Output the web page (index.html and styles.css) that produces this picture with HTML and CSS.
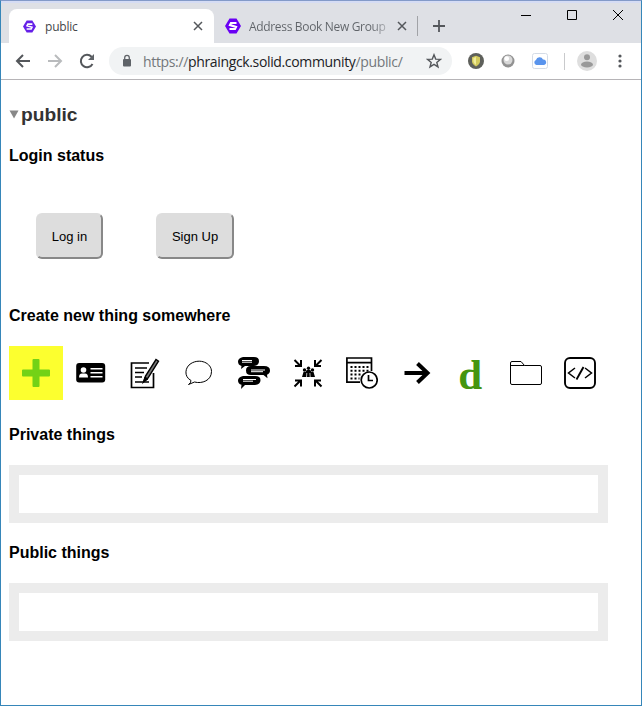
FILE: index.html
```html
<!DOCTYPE html>
<html lang="en">
<head>
<meta charset="utf-8">
<title>public</title>
<link rel="stylesheet" href="styles.css">
</head>
<body>
<div class="window">
  <header class="tabstrip">
    <div class="tab active">
      <svg class="logo small" viewBox="0 0 16 16"><path fill="#651fe8" d="M4.500 .5h7L16 8l-4.500 7.500h-7L0 8z"/><path fill="none" stroke="#fff" stroke-width="2" d="M11.500 5H6L5 7l6 2-1 2H4.500"/></svg>
      <span class="tab-title first-title">public</span>
      <svg class="close" viewBox="0 0 10 10"><path d="M1 1l8 8M9 1L1 9"/></svg>
    </div>
    <div class="tab second">
      <svg class="logo" viewBox="0 0 16 16"><path fill="#6a00f4" d="M4.500 0.500h7L16 8l-4.500 7.500h-7L0 8z"/><path fill="none" stroke="#fff" stroke-width="2.200" d="M11.500 5H6L5 7l6 2-1 2H4.500"/></svg>
      <span class="tab-title second-title">Address Book New Group</span>
      <svg class="close" viewBox="0 0 10 10"><path d="M1 1l8 8M9 1L1 9"/></svg>
    </div>
    <svg class="new-tab" viewBox="0 0 12 12"><path d="M6 0v12M0 6h12"/></svg>
    <div class="controls">
      <svg viewBox="0 0 12 12"><path d="M1 6.500h10"/></svg>
      <svg viewBox="0 0 12 12"><path d="M1.500 1.500h9v9h-9z"/></svg>
      <svg viewBox="0 0 12 12"><path d="M1 1l10 10M11 1L1 11"/></svg>
    </div>
  </header>
  <nav class="toolbar">
    <svg class="nav-icon" viewBox="0 0 16 16"><path d="M15 8H2M8 2L2 8l6 6"/></svg>
    <svg class="nav-icon dim" viewBox="0 0 16 16"><path d="M1 8h13M8 2l6 6-6 6"/></svg>
    <svg class="nav-icon" viewBox="0 0 16 16"><path d="M13.500 11A6.200 6.200 0 1 1 12.500 3.700L14 5.500"/><path fill="#5f6368" stroke="none" d="M15 1v6H9z"/></svg>
    <div class="address">
      <svg class="lock" viewBox="0 0 10 14"><rect x="1" y="5" width="8" height="7.500" rx="1" fill="#5f6368"/><path d="M2.700 5.500V3.700a2.300 2.300 0 0 1 4.600 0v1.800" fill="none" stroke="#5f6368" stroke-width="1.300"/></svg>
      <span class="url">https://<b>phraingck.solid.community</b>/public/</span>
      <svg class="star" viewBox="0 0 16 16"><path d="M8 1.800l1.700 4.300 4.700.3-3.600 3 1.200 4.500L8 11.400l-4 2.500 1.200-4.500-3.600-3 4.700-.3z"/></svg>
    </div>
    <div class="extensions">
      <svg viewBox="0 0 16 16"><circle cx="8" cy="8" r="8" fill="#5e605b"/><path d="M8 2.700l4 1.500v4q0 3-4 5.300-4-2.300-4-5.300v-4z" fill="#d4cb5d"/><path d="M8 4v8q-2.600-1.500-2.600-4V5z" fill="#f1ed9b"/></svg>
      <svg viewBox="0 0 16 16"><circle cx="8" cy="8" r="6.500" fill="#929292"/><circle cx="8" cy="7" r="4.500" fill="#d8d8d8"/><circle cx="6.700" cy="5.700" r="2.400" fill="#fff"/></svg>
      <svg viewBox="0 0 16 16"><rect x=".5" y=".5" width="15" height="15" rx="2" fill="#fff" stroke="#d5dce6"/><path d="M4.500 12a2.600 2.600 0 0 1-.5-5 3.700 3.700 0 0 1 7-.5A2.800 2.800 0 0 1 12 12z" fill="#5994ed"/></svg>
    </div>
    <span class="divider"></span>
    <svg class="avatar" viewBox="0 0 20 20"><circle cx="10" cy="10" r="10" fill="#dedede"/><circle cx="10" cy="6.200" r="3" fill="#999"/><ellipse cx="10" cy="13.500" rx="6" ry="3" fill="#999"/></svg>
    <svg class="more" viewBox="0 0 4 14"><circle cx="2" cy="2" r="1.600"/><circle cx="2" cy="7" r="1.600"/><circle cx="2" cy="12" r="1.600"/></svg>
  </nav>
  <main>
    <h1><svg class="triangle" viewBox="0 0 9 9"><path d="M0 .5h9L4.500 8.500z"/></svg>public</h1>
    <h2>Login status</h2>
    <div class="login">
      <button class="log-in">Log in</button>
      <button class="sign-up">Sign Up</button>
    </div>
    <h2>Create new thing somewhere</h2>
    <div class="things">
      <div class="thing add"><svg viewBox="0 0 32 32"><path fill="#73d216" d="M13.500 2h5q1 0 1 1v9.500h9.500q1 0 1 1v5q0 1-1 1h-9.500V29q0 1-1 1h-5q-1 0-1-1v-9.500H3q-1 0-1-1v-5q0-1 1-1h9.500V3q0-1 1-1z"/></svg></div>
      <div class="thing"><svg viewBox="0 0 32 32"><rect x="2.200" y="6" width="29" height="19.500" rx="3"/><g fill="#fff"><circle cx="9.500" cy="13" r="2.800"/><path d="M5 20.500q0-4 3-4h3q3 0 3 4z"/><path d="M16.500 11h12v1.500h-12zM16.500 15h12v1.500h-12zM16.500 19h12v1.500h-12z"/></g></svg></div>
      <div class="thing"><svg viewBox="0 0 32 32" class="line"><path d="M20 6H2.500v24.500h22V16" stroke-width="1.700"/><path d="M6 11h12M6 15.500h9M6 20h7M6 25h14" stroke-width="1.500"/><path d="M14.500 25l2-6L27 2.500l2.500 1.700L19 21z" fill="#777" stroke-width="1.400"/><path d="M14.500 25l1.500-5 3 2z" fill="#000"/></svg></div>
      <div class="thing"><svg viewBox="0 0 32 32" class="line"><path d="M8 23.500C.5 19.500 2 10 8 6.500c9-5.500 20.500-.5 20.500 8 0 9-9.500 12.500-17 10.500L5.500 27.500Q8 26 8 23.500z"/></svg></div>
      <div class="thing"><svg viewBox="0 0 32 32"><path d="M5 0h11q5 0 5 4.200T16 9H7l-4 3 .5-3Q0 8 0 4.500T5 0zM13 9h13q6 0 6 4.500 0 3-3 4.300l.5 3.500-4-3.200H13q-5 0-5-4.600T13 9zM5 19h12q5.500 0 5.500 4.200T17 28H7l-4 4 .5-4.200Q0 27 0 23.500T5 19z"/><g stroke="#fff" stroke-width="1"><path d="M4 3.500h10M4 5.200h10M13 13h14M13 14.700h12M5 22.500h13M5 24.200h10" fill="none"/></g></svg></div>
      <div class="thing"><svg viewBox="0 0 32 32"><path fill="none" stroke="#000" stroke-width="2" d="M2.500 3l6 6M3 9h6V3M29.500 3l-6 6M29 9h-6V3M2.500 29.500l6-6M3 23.500h6v6M29.500 29.500l-6-6M29 23.500h-6v6"/><circle cx="12.500" cy="13" r="1.700"/><circle cx="16.500" cy="11.200" r="1.700"/><circle cx="20.500" cy="13" r="1.700"/><path d="M10 20l1.500-5h2l1.200-2h3.600l1.200 2h2L23 20z"/><path d="M14.500 20l.3-4M18.200 20l-.3-4" stroke="#fff" stroke-width=".7"/></svg></div>
      <div class="thing"><svg viewBox="0 0 32 32"><path fill="none" stroke="#000" stroke-width="1.700" d="M14 25.200H.900V1H25.500v13M1 5.700h24.500"/><path fill="none" stroke="#000" stroke-width="2" stroke-dasharray="2 2" d="M4.500 10h18M4.500 13.800h18M4.500 17.600h12M4.500 21.400h9"/><circle cx="23.200" cy="23" r="8" fill="#fff" stroke="#000" stroke-width="1.700"/><path fill="none" stroke="#000" stroke-width="1.700" d="M22.500 18v5.500H27"/></svg></div>
      <div class="thing"><svg viewBox="0 0 32 32"><path fill="none" stroke="#000" stroke-width="4" d="M3.500 16h23M16.500 6.500l10 9.500-10 9.500"/></svg></div>
      <div class="thing"><span class="letter">d</span></div>
      <div class="thing"><svg viewBox="0 0 32 32" class="line"><path d="M.5 26V6q0-1.500 1.500-1.500h9L14.500 8.500H30q1.500 0 1.500 1.500v16q0 1.500-1.500 1.500H2Q.5 27.500.5 26zM.5 8.500h14"/></svg></div>
      <div class="thing"><svg viewBox="0 0 32 32" class="line"><rect x="1" y="1" width="30" height="30" rx="5" stroke-width="1.900"/><path d="M11 11l-6.500 5L11 21M21 11l6.500 5-6.500 5" stroke-width="1.500"/><path d="M19.500 10l-7 12.500" stroke-width="1.900"/></svg></div>
    </div>
    <h2>Private things</h2>
    <div class="dropbox"></div>
    <h2>Public things</h2>
    <div class="dropbox"></div>
  </main>
</div>
</body>
</html>
```
FILE: styles.css
```css
* { box-sizing: border-box; }
body { margin: 0; font-family: "Liberation Sans", Arial, sans-serif; color: #000; }
svg { display: block; flex: none; }
.window { height: 706px; border: 1px solid #3686b9; border-top-color: #839ac8; background: #fff; overflow: hidden; }
.tabstrip { height: 42px; background: #dee0e5; border-top: 2px solid #d5dcf4; display: flex; align-items: flex-start; padding-left: 8px; }
.tab { display: flex; align-items: center; height: 34px; margin-top: 6px; color: #5f6368; font: 12px "Open Sans", sans-serif; }
.active { width: 205px; background: #fff; border-radius: 8px 8px 0 0; padding: 0 11px 0 14px; color: #45474a; }
.second { width: 204px; padding: 0 10px 0 11px; border-right: 1px solid #a1a3a7; height: 20px; margin-top: 13px; }
.logo { width: 16px; height: 16px; }
.logo.small { width: 13px; height: 13px; }
.tab-title { white-space: nowrap; margin-right: auto; }
.first-title { margin-left: 9px; letter-spacing: -.2px; }
.second-title { width: 139px; margin-left: 8px; letter-spacing: -.33px; background: linear-gradient(90deg, #5f6368 88%, #b9bbc0); -webkit-background-clip: text; background-clip: text; color: transparent; }
.close { width: 10px; height: 10px; fill: none; stroke: #54575b; stroke-width: 1.5; }
.new-tab { width: 12px; height: 12px; margin: 17px 0 0 15px; stroke: #54575b; stroke-width: 1.8; }
.controls { display: flex; gap: 34px; margin: 6px 17px 0 auto; }
.controls svg { width: 12px; height: 12px; fill: none; stroke: #000; }
.toolbar { height: 37px; display: flex; align-items: center; padding-left: 14px; border-bottom: 1px solid #b6b4b7; }
.nav-icon { width: 16px; height: 16px; margin-right: 16px; fill: none; stroke: #54575b; stroke-width: 2; }
.dim { stroke: #b9bbbd; }
.address { height: 28px; width: 343px; margin-left: -2px; border-radius: 14px; background: #f1f3f4; display: flex; align-items: center; padding: 0 10px 0 13px; }
.lock { width: 10px; height: 14px; }
.url { font: 14px "Open Sans", sans-serif; letter-spacing: -.35px; color: #73777b; margin: 0 auto 0 11px; white-space: nowrap; }
.url b { font-weight: 400; color: #202124; }
.star { width: 16px; height: 16px; fill: none; stroke: #54575b; stroke-width: 1.4; }
.extensions { display: flex; gap: 16px; margin-left: 16px; }
.extensions svg { width: 16px; height: 16px; }
.divider { width: 1px; height: 17px; background: #c9cacc; margin: 0 12px 0 16px; }
.avatar { width: 20px; height: 20px; }
.more { width: 4px; height: 14px; margin-left: 21px; margin-right: auto; fill: #54575b; }
main { padding: 23px 8px 0; }
h1 { display: flex; align-items: center; height: 23px; margin: 0; font-size: 19.2px; line-height: 23px; color: #333; }
.triangle { width: 10px; height: 9px; margin-right: 2px; fill: #888; }
h2 { margin: 0; font-size: 16px; line-height: 18px; height: 18px; }
h1 + h2 { margin-top: 21px; }
.login { display: flex; gap: 53px; padding: 48px 27px; }
button { height: 46px; padding: 0; font: 13px "Liberation Sans", Arial, sans-serif; color: #000; background: #ddd; border: 2px solid; border-color: #ddd #888 #888 #ddd; border-radius: 6px; }
.log-in { width: 67px; }
.sign-up { width: 78px; }
.things { display: flex; gap: .4px; margin: 21px 0 26px; }
.thing { width: 54px; height: 54px; display: flex; align-items: center; justify-content: center; }
.thing svg { width: 32px; height: 32px; }
.add { background: #fcff2f; }
.line { fill: none; stroke: #000; stroke-width: 1; }
.letter { font: bold 43px/32px "Liberation Serif", serif; color: #459510; padding: 3px 2px 0 0; }
.dropbox { width: 599px; height: 58px; border: 10px solid #ececec; margin: 21px 0; }
```
